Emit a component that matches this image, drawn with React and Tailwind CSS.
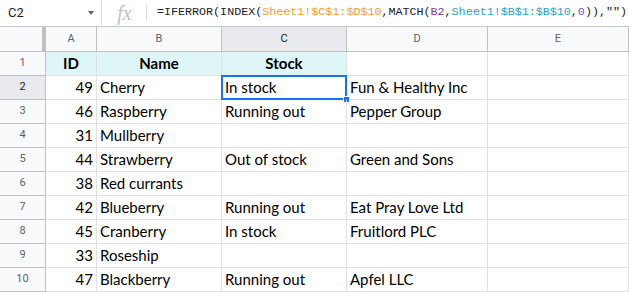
import React from "react";

const rows = [
  ["49", "Cherry", "In stock", "Fun & Healthy Inc"],
  ["46", "Raspberry", "Running out", "Pepper Group"],
  ["31", "Mullberry", "", ""],
  ["44", "Strawberry", "Out of stock", "Green and Sons"],
  ["38", "Red currants", "", ""],
  ["42", "Blueberry", "Running out", "Eat Pray Love Ltd"],
  ["45", "Cranberry", "In stock", "Fruitlord PLC"],
  ["33", "Roseship", "", ""],
  ["47", "Blackberry", "Running out", "Apfel LLC"],
];

const cols = "grid grid-cols-[46px_51px_125px_125px_141px_1fr]";
const cell = "h-6 border-r border-b border-[#e2e2e2] px-[3px] flex items-center text-[15px] text-black whitespace-nowrap overflow-visible";

function FormulaBar() {
  return (
    <div className="flex h-[27px] border-b border-[#c4c7c5] bg-white">
      <div className="w-[102px] flex items-center justify-between pl-[8px] pr-[7px] border-r border-[#e0e0e0] font-['Roboto'] text-[13px] text-[#202124]">
        <span>C2</span>
        <span className="w-0 h-0 border-l-[3.5px] border-r-[3.5px] border-t-[4px] border-l-transparent border-r-transparent border-t-[#5f6368]" />
      </div>
      <div className="w-[44px] flex items-center justify-center font-['Liberation_Serif'] italic text-[20px] text-[#c0c0c0] pl-[1px]">fx</div>
      <div className="w-px h-[16px] self-center bg-[#dadce0]" />
      <div className="flex items-center pl-[10px] font-['Liberation_Mono'] text-[11.7px] text-[#202124] whitespace-nowrap">
        <span>=IFERROR(INDEX(</span>
        <span className="text-[#f29b30]">Sheet1!$C$1:$D$10</span>
        <span>,MATCH(</span>
        <span className="text-[#7e3c94]">B2</span>
        <span>,</span>
        <span className="text-[#20a4c8]">Sheet1!$B$1:$B$10</span>
        <span>,</span>
        <span className="text-[#5c5cc8]">0</span>
        <span>)),""&#41;</span>
      </div>
    </div>
  );
}

export default function App() {
  return (
    <div className="w-[629px] h-[292px] overflow-hidden bg-white font-['Lato']">
      <FormulaBar />
      <div className={cols}>
        <div className="h-[25px] bg-[#f8f9fa] border-r-4 border-b border-[#c0c0c0]" />
        {["A", "B", "C", "D", "E"].map((l) => (
          <div
            key={l}
            className={`h-[25px] flex items-center justify-center border-r border-b border-[#c0c0c0] font-['Roboto'] text-[11px] ${l === "C" ? "bg-[#e8eaed] text-[#202124]" : "bg-[#f8f9fa] text-[#5f6368]"}`}
          >
            {l}
          </div>
        ))}

        <div className="h-6 bg-[#f8f9fa] border-r border-b border-[#c0c0c0] flex items-center justify-center font-['Roboto'] text-[11px] text-[#5f6368]">1</div>
        <div className={`${cell} justify-center font-bold bg-[#def6f8]`}>ID</div>
        <div className={`${cell} justify-center font-bold bg-[#def6f8]`}>Name</div>
        <div className={`${cell} justify-center font-bold bg-[#def6f8]`}>Stock</div>
        <div className={cell} />
        <div className={cell} />

        {rows.map((r, i) => (
          <React.Fragment key={i}>
            <div
              className={`h-6 border-r border-b border-[#c0c0c0] flex items-center justify-center font-['Roboto'] text-[11px] ${i === 0 ? "bg-[#e8eaed] text-[#202124]" : "bg-[#f8f9fa] text-[#5f6368]"}`}
            >
              {i + 2}
            </div>
            <div className={`${cell} justify-end`}>{r[0]}</div>
            <div className={cell}>{r[1]}</div>
            <div className={`${cell} relative`}>
              {r[2]}
              {i === 0 && (
                <>
                  <div className="absolute left-[-1px] top-[-1px] right-[-1px] bottom-[-1px] border-2 border-[#1a73e8]" />
                  <div className="absolute right-[-4px] bottom-[-4px] w-[7px] h-[7px] bg-[#1a73e8] border border-white" />
                </>
              )}
            </div>
            <div className={cell}>{r[3]}</div>
            <div className={cell} />
          </React.Fragment>
        ))}
      </div>
    </div>
  );
}
